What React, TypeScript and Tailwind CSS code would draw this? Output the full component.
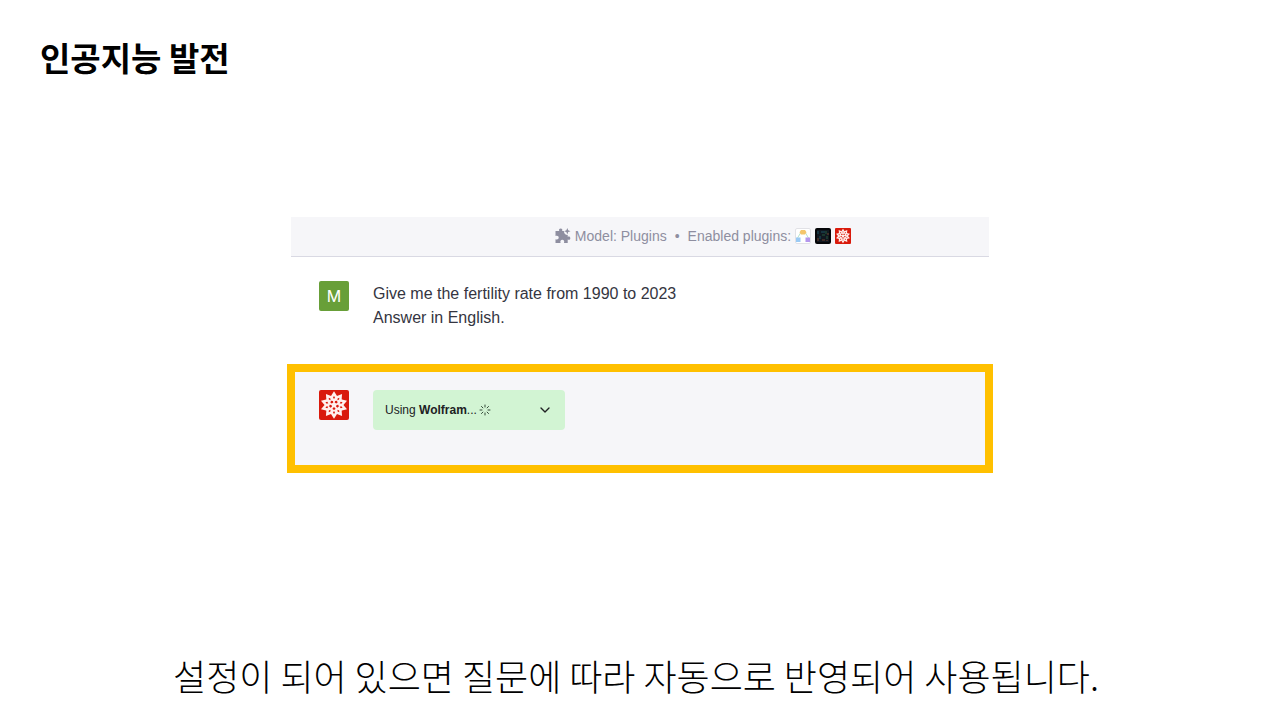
import { ChevronDown, Loader } from "lucide-react";

const PROMPT_LINES = [
  "Give me the fertility rate from 1990 to 2023",
  "Answer in English.",
];

const SPIKE_ANGLES = [0, 36, 72, 108, 144, 180, 216, 252, 288, 324];

function WolframIcon({ className }: { className: string }) {
  return (
    <svg viewBox="0 0 30 30" className={className} role="img" aria-label="Wolfram">
      <rect width="30" height="30" rx="2" fill="#d91a0c" />
      {SPIKE_ANGLES.map((angle) => (
        <path
          key={angle}
          d="M15 1.300 18.300 6.600 15 12 11.700 6.600Z"
          fill="#fff1ee"
          transform={`rotate(${angle} 15 15)`}
        />
      ))}
      <circle cx="15" cy="15" r="8.800" fill="#fff1ee" />
      {SPIKE_ANGLES.map((angle) => (
        <path
          key={angle}
          d="M15 6 16 7.600 15 9 14 7.600Z"
          fill="#d91a0c"
          transform={`rotate(${angle} 15 15)`}
        />
      ))}
      {[36, 108, 180, 252, 324].map((angle) => (
        <path
          key={angle}
          d="M15 9.900 16.500 11 15.900 12.600H14.100L13.500 11Z"
          fill="#d91a0c"
          transform={`rotate(${angle} 15 15)`}
        />
      ))}
    </svg>
  );
}

function PuzzleIcon() {
  return (
    <svg viewBox="0 0 16 16" className="size-4" fill="#8e8ea0" aria-hidden="true">
      <path d="M.5 3h3.800C3.600 1.500 4.300.5 5.700.5S7.800 1.500 7.100 3h1.700c.3 2.600 1.500 3.900 3.900 4.100v1.700c1.600-.7 2.600.1 2.600 1.400s-1 2.100-2.600 1.400V15H9c.7-1.900-.1-3.200-1.700-3.200S4.900 13.100 5.600 15H.5v-3.800c1.900.7 3.200-.1 3.200-1.700S2.400 7.200.5 7.900Z" />
      <path d="M12.300 0 13.200 2.300 15.500 3.200 13.200 4.100 12.300 6.400 11.400 4.100 9.100 3.200 11.400 2.300Z" />
    </svg>
  );
}

function DiagramIcon() {
  return (
    <svg viewBox="0 0 16 16" className="size-4" role="img" aria-label="Diagrams">
      <rect x=".5" y=".5" width="15" height="15" rx="1.500" fill="#fff" stroke="#e1e1e6" />
      <path d="M5.500 5 2.500 10M10.500 5l3 5" fill="none" stroke="#b8e4cb" />
      <path d="M6 2h4L11.500 4.200 10 6.500H6L4.500 4.200Z" fill="#f5c66b" />
      <rect x="1" y="9.500" width="4.500" height="4.500" fill="#9acaf5" />
      <rect x="10.500" y="9.500" width="4.500" height="4.500" fill="#b497ed" />
    </svg>
  );
}

function MatrixIcon() {
  return (
    <svg viewBox="0 0 16 16" className="size-4" role="img" aria-label="Code plugin">
      <rect width="16" height="16" rx="2" fill="#050609" />
      <rect x="2" y="2" width="12" height="12" fill="#101720" />
      <path d="M3 3v3M6 4h4M5 8v3" stroke="#1d5360" />
      <path d="M11 3v3M12 8v3M7 7h3" stroke="#24583b" />
      <path d="M3 10v3M7 12h3M12 12v1M13 5v2" stroke="#71402d" />
    </svg>
  );
}

export default function App() {
  return (
    <div className="flex min-h-screen flex-col justify-between bg-white text-black">
      <h1 className="px-10 pt-8 font-['Noto_Sans_CJK_KR',sans-serif] text-[33px] leading-[50px] font-bold">
        인공지능 발전
      </h1>

      <main className="mx-auto w-full max-w-[706px] pb-10 font-['Liberation_Sans',sans-serif]">
        <header className="mx-1 flex h-10 items-center justify-center gap-1 border-b border-[#d9d9e3] bg-[#f6f6f9] pb-0.5 pl-[126px] text-sm text-[#8e8ea0]">
          <PuzzleIcon />
          <span>Model: Plugins</span>
          <span className="px-1">•</span>
          <span>Enabled plugins:</span>
          <DiagramIcon />
          <MatrixIcon />
          <WolframIcon className="size-4" />
        </header>

        <section className="flex gap-6 px-8 pt-6 pb-[34px]">
          <div className="flex size-[30px] shrink-0 items-center justify-center rounded-xs bg-[#689f38] font-['Inter',sans-serif] text-base text-white">
            M
          </div>
          <div className="pt-px text-base leading-6 text-[#343541]">
            {PROMPT_LINES.map((line) => (
              <p key={line}>{line}</p>
            ))}
          </div>
        </section>

        <section className="flex gap-6 border-8 border-[#ffc000] bg-[#f6f6f9] px-6 pt-[18px] pb-[35px]">
          <WolframIcon className="size-[30px] shrink-0" />
          <button
            type="button"
            className="flex h-10 w-48 items-center rounded bg-[#d2f4d3] px-3 text-xs text-[#202123]"
          >
            <span>
              Using <span className="font-semibold">Wolfram</span>...
            </span>
            <Loader className="ml-0.5 size-3 text-[#344b38]" aria-hidden="true" />
            <ChevronDown className="ml-auto size-4" aria-hidden="true" />
          </button>
        </section>
      </main>

      <p className="pr-16 pb-[18px] pl-14 text-center font-['Noto_Sans_CJK_KR',sans-serif] text-4xl leading-[54px] font-light">
        설정이 되어 있으면 질문에 따라 자동으로 반영되어 사용됩니다.
      </p>
    </div>
  );
}
